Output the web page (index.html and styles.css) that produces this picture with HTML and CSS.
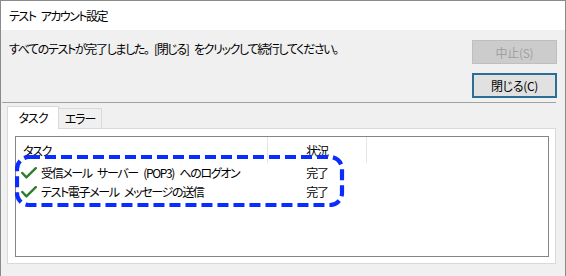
FILE: index.html
```html
<!DOCTYPE html>
<html lang="ja">
<head>
<meta charset="utf-8">
<title>テスト アカウント設定</title>
<link rel="stylesheet" href="styles.css">
</head>
<body>
<div class="window">
  <div class="titlebar">テスト アカウント設定</div>
  <div class="top">
    <p class="msg">すべてのテストが完了しました。 [閉じる] をクリックして続行してください。</p>
    <div class="buttons">
      <button class="btn btn-disabled">中止(S)</button>
      <button class="btn btn-default">閉じる(C)</button>
    </div>
  </div>
  <div class="sep"></div>
  <div class="tabs">
    <div class="tabstrip">
      <div class="tab tab-active">タスク</div>
      <div class="tab">エラー</div>
    </div>
    <div class="panel">
      <div class="list">
        <div class="row row-head">
          <div class="c1">タスク</div>
          <div class="c2">状況</div>
        </div>
        <div class="row">
          <div class="c1"><svg class="check" viewBox="0 0 16 12" width="16" height="12"><path d="M1.3 6 L5.4 10.4 L14.8 1.2" fill="none" stroke="#2f7d2f" stroke-width="2.4" stroke-linecap="round" stroke-linejoin="round"/></svg>受信メール サーバー (POP3) へのログオン</div>
          <div class="c2">完了</div>
        </div>
        <div class="row">
          <div class="c1"><svg class="check" viewBox="0 0 16 12" width="16" height="12"><path d="M1.3 6 L5.4 10.4 L14.8 1.2" fill="none" stroke="#2f7d2f" stroke-width="2.4" stroke-linecap="round" stroke-linejoin="round"/></svg>テスト電子メール メッセージの送信</div>
          <div class="c2">完了</div>
        </div>
      </div>
    </div>
  </div>
  <svg class="highlight" width="330" height="52" viewBox="0 0 330 52"><rect x="2" y="2" width="325" height="48" rx="12" ry="12" fill="none" stroke="#0a2cff" stroke-width="4.2" stroke-dasharray="11 5"/></svg>
</div>
</body>
</html>
```
FILE: styles.css
```css
html, body {
  margin: 0;
  padding: 0;
  background: #f0f0f0;
}
body {
  font-family: "Noto Sans CJK JP", "Noto Sans", sans-serif;
  font-size: 12px;
  font-feature-settings: "palt";
  color: #000;
}
.window {
  position: relative;
  width: 566px;
  height: 276px;
  box-sizing: border-box;
  border: 1px solid #8a8a8a;
  border-bottom: none;
  background: #f0f0f0;
  overflow: hidden;
}
.titlebar {
  height: 29px;
  line-height: 29px;
  padding-left: 8px;
  background: #fff;
  letter-spacing: -1.5px;
  word-spacing: 4px;
}
.top {
  display: flex;
  justify-content: space-between;
  align-items: flex-start;
  padding: 10px 8px 0 8px;
}
.msg {
  margin: 0;
  line-height: 18px;
  letter-spacing: -1.35px;
  word-spacing: 4px;
}
.buttons {
  display: flex;
  flex-direction: column;
  gap: 9px;
  width: 85px;
}
.btn {
  font: inherit;
  font-feature-settings: "palt";
  box-sizing: border-box;
  width: 85px;
  padding: 0;
  margin: 0;
  letter-spacing: -0.3px;
}
.btn-disabled {
  height: 24px;
  background: #cccccc;
  border: 1px solid #bfbfbf;
  color: #a0a0a0;
}
.btn-default {
  height: 25px;
  background: #e1e1e1;
  border: 2px solid #2d6e96;
  color: #000;
}
.sep {
  margin: 4px 9px 0 1px;
  border-top: 1px solid #a0a0a0;
}
.tabs {
  margin: 3px 9px 0 6px;
}
.tabstrip {
  display: flex;
  align-items: flex-end;
  height: 22px;
  letter-spacing: -1px;
}
.tab {
  box-sizing: border-box;
  display: flex;
  align-items: center;
  justify-content: center;
}
.tab-active {
  position: relative;
  z-index: 1;
  width: 52px;
  height: 23px;
  margin-bottom: -1px;
  background: #fff;
  border: 1px solid #d9d9d9;
  border-bottom: none;
  padding-bottom: 1px;
}
.tab:not(.tab-active) {
  width: 43px;
  height: 20px;
  background: #f0f0f0;
  border-top: 1px solid #d9d9d9;
  border-right: 1px solid #d9d9d9;
}
.panel {
  box-sizing: border-box;
  height: 136px;
  background: #fff;
  border: 1px solid #d9d9d9;
  padding: 7px 6px 6px 7px;
}
.list {
  box-sizing: border-box;
  height: 121px;
  border: 1px solid #858585;
  background: #fff;
}
.row {
  display: flex;
  height: 19px;
  align-items: center;
  letter-spacing: -1.35px;
  word-spacing: 4px;
}
.row-head {
  height: 26px;
  align-items: stretch;
}
.c1 {
  box-sizing: border-box;
  width: 252px;
  display: flex;
  align-items: center;
  border-right: 1px solid transparent;
}
.c2 {
  box-sizing: border-box;
  width: 99px;
  display: flex;
  align-items: center;
  justify-content: center;
  border-right: 1px solid transparent;
}
.row-head .c1,
.row-head .c2 {
  border-right-color: #e5e5e5;
}
.row-head .c1 {
  padding-left: 7px;
}
.row .c1 .check {
  margin: 0 4px 0 5px;
  flex: none;
}
.highlight {
  position: absolute;
  left: 14px;
  top: 154px;
}
```
